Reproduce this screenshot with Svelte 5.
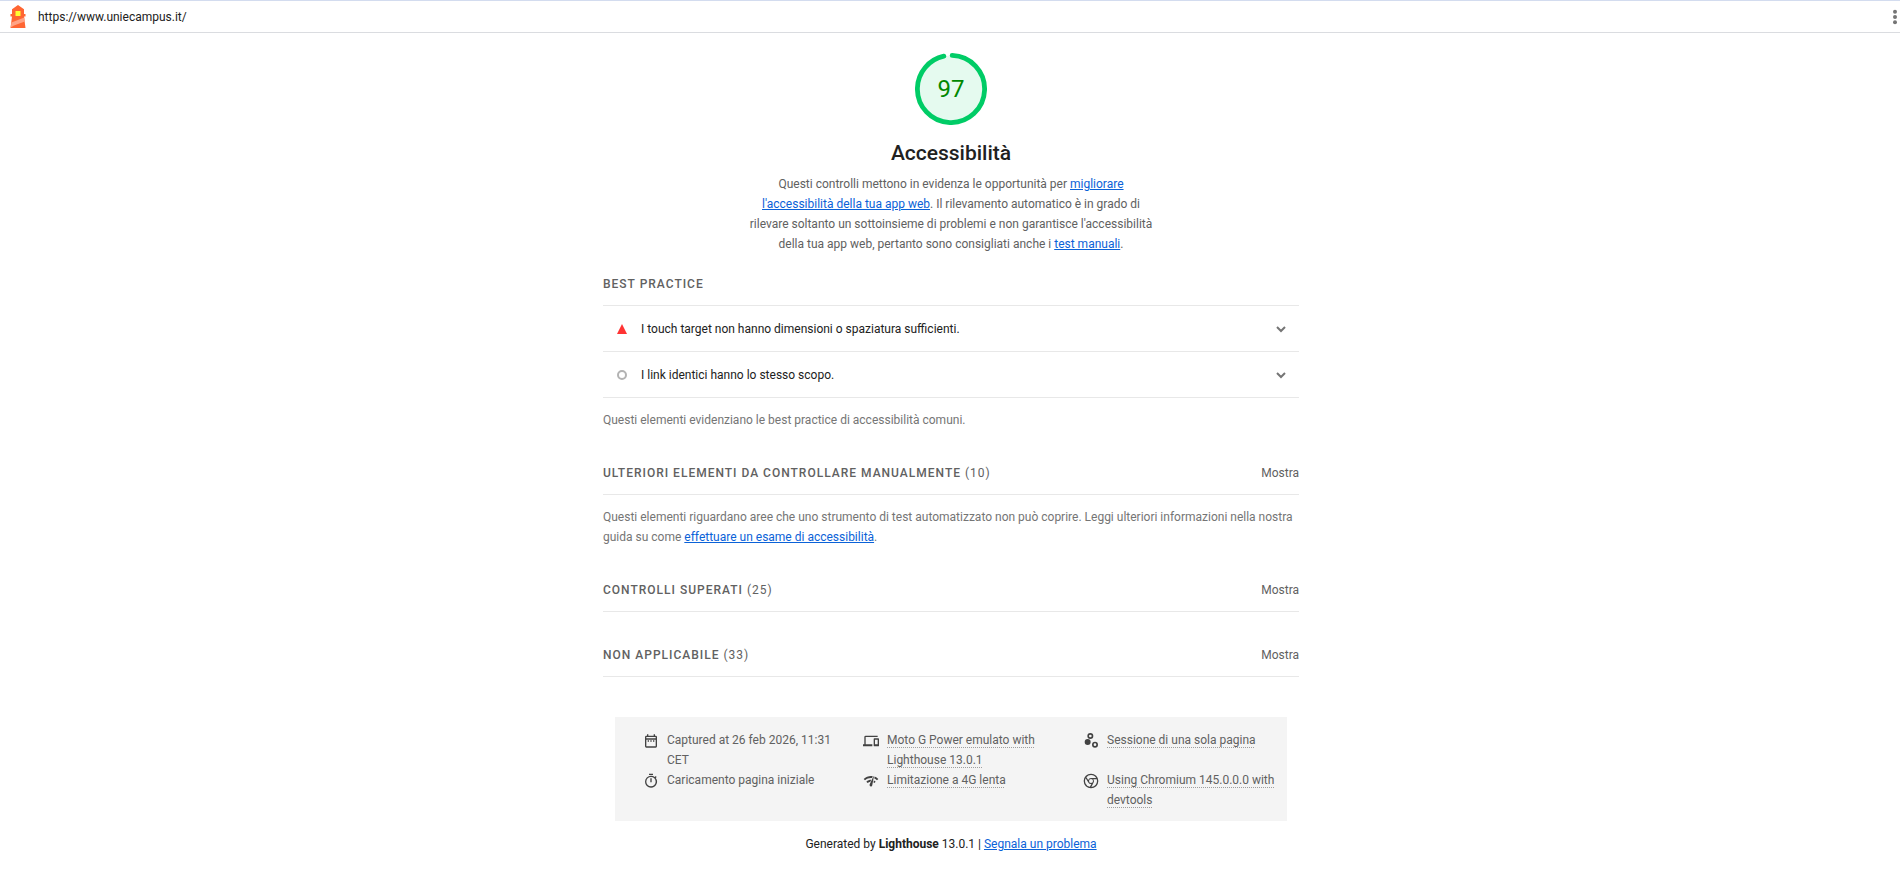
<script>
  const url = 'https://www.uniecampus.it/';
  const score = 97;

  const audits = [
    {title: 'I touch target non hanno dimensioni o spaziatura sufficienti.', status: 'fail'},
    {title: 'I link identici hanno lo stesso scopo.', status: 'informative'}
  ];

  const meta = [
    {icon: 'date', text: 'Captured at 26 feb 2026, 11:31 CET'},
    {icon: 'devices', text: 'Moto G Power emulato with Lighthouse 13.0.1', tooltip: true},
    {icon: 'samples', text: 'Sessione di una sola pagina', tooltip: true},
    {icon: 'stopwatch', text: 'Caricamento pagina iniziale'},
    {icon: 'network', text: 'Limitazione a 4G lenta', tooltip: true},
    {icon: 'chrome', text: 'Using Chromium 145.0.0.0 with devtools', tooltip: true}
  ];

  const icons = {
    date: 'M7 11h2v2H7zm14-5v14a2 2 0 01-2 2H5a2 2 0 01-2-2V6c0-1.1.9-2 2-2h1V2h2v2h8V2h2v2h1a2 2 0 012 2zM5 8h14V6H5v2zm14 12V10H5v10h14zm-4-7h2v-2h-2v2zm-4 0h2v-2h-2v2z',
    devices: 'M4 6h18V4H4a2 2 0 00-2 2v11H0v3h14v-3H4V6zm19 2h-6a1 1 0 00-1 1v10c0 .6.5 1 1 1h6c.6 0 1-.5 1-1V9c0-.6-.5-1-1-1zm-1 9h-4v-7h4v7z',
    samples: 'M7 9a4.500 4.500 0 110 9 4.500 4.500 0 010-9zM11 0a4.500 4.500 0 110 9 4.500 4.500 0 010-9zm0 2.500a2 2 0 100 4 2 2 0 000-4zM18 13a4.500 4.500 0 110 9 4.500 4.500 0 010-9zm0 2.500a2 2 0 100 4 2 2 0 000-4z',
    stopwatch: 'M15 1H9v2h6V1zm-4 13h2V8h-2v6zm8.1-6.6L20.5 6l-1.4-1.4L17.7 6A9 9 0 0012 4a9 9 0 000 18 9 9 0 007.1-14.6zM12 20a7 7 0 110-14 7 7 0 010 14z',
    network: 'M15.9 5c-.2 0-.3 0-.4.2v.2L10.1 17a2 2 0 00-.2 1 2 2 0 004 .4l2.4-12.9c0-.3-.2-.5-.5-.5zM1 9l2 2c2.9-2.9 6.8-4 10.5-3.6l1.2-2.7C10 3.8 4.7 5.3 1 9zm20 2l2-2a15.4 15.4 0 00-5.6-3.6L17 8.2c1.5.7 2.9 1.6 4 2.8zm-4 4l2-2a9.9 9.9 0 00-2.7-1.9l-.5 3 1.2.9zM5 13l2 2a7.1 7.1 0 014-2l1.3-2.9C9.7 10.1 7 11 5 13z',
    chrome: 'M12 1a11 11 0 100 22 11 11 0 000-22zm0 2a9 9 0 017.8 4.5H12a4.500 4.500 0 00-4.200 2.900L5.100 6.200A9 9 0 0112 3zm0 6a3 3 0 110 6 3 3 0 010-6zM4 8l4 6.200a4.500 4.500 0 004.600 2.300L10.300 20.800A9 9 0 014 8zm8.600 13l3.500-7a4.500 4.500 0 00-.700-4.500h5.200A9 9 0 0112.600 21z'
  };

  // ring length for a radius of 56
  const ring = 2 * Math.PI * 56;
  const arc = ring * score / 100 - 4;
</script>

{#snippet group(title, count)}
  <summary class="group-header">
    <h2>{title} <span class="count">({count})</span></h2>
    <span class="toggle">Mostra</span>
  </summary>
{/snippet}

<header class="topbar">
  <svg class="logo" viewBox="0 0 24 24">
    <path fill="#f63" d="m12 0 6 4.200V9h1.500v2.500H18L19.500 23h-15L6 11.500H4.500V9H6V4.200z" />
    <path fill="#ffa385" d="m5.500 17.500 12.800-5 .5 4L8 20.500l-3.400 2z" />
    <path fill="#ff3" d="M9.500 6h5v5h-5z" />
  </svg>
  <a class="url" href={url}>{url}</a>
  <button class="tools" aria-label="Strumenti">
    <svg viewBox="0 0 24 24">
      <circle cx="12" cy="4" r="3" /><circle cx="12" cy="12" r="3" /><circle cx="12" cy="20" r="3" />
    </svg>
  </button>
</header>

<div class="content">
  <main class="report">
    <section class="category">
      <div class="gauge">
        <svg viewBox="0 0 120 120">
          <circle class="gauge-base" cx="60" cy="60" r="56" />
          <circle class="gauge-arc" cx="60" cy="60" r="56" stroke-dasharray="{arc} {ring}" />
        </svg>
        <span class="score">{score}</span>
      </div>
      <h1>Accessibilità</h1>
      <p class="intro">
        Questi controlli mettono in evidenza le opportunità per <a href="#migliorare">migliorare l'accessibilità della tua app web</a>.
        Il rilevamento automatico è in grado di rilevare soltanto un sottoinsieme di problemi e non garantisce l'accessibilità
        della tua app web, pertanto sono consigliati anche i <a href="#manuali">test manuali</a>.
      </p>
    </section>

    <section class="group">
      <div class="group-header"><h2>Best practice</h2></div>
      {#each audits as audit}
        <details class="audit">
          <summary>
            <svg class="status {audit.status}" viewBox="0 0 10 10">
              {#if audit.status === 'fail'}
                <path d="M5 0l5 10H0z" />
              {:else}
                <circle cx="5" cy="5" r="4" />
              {/if}
            </svg>
            <span class="audit-title">{audit.title}</span>
            <svg class="chevron" viewBox="0 0 10 10"><path d="M1 3l4 4 4-4" /></svg>
          </summary>
        </details>
      {/each}
      <p class="note">Questi elementi evidenziano le best practice di accessibilità comuni.</p>
    </section>

    <section class="group">
      <details>
        {@render group('Ulteriori elementi da controllare manualmente', 10)}
      </details>
      <p class="note">
        Questi elementi riguardano aree che uno strumento di test automatizzato non può coprire. Leggi ulteriori informazioni nella nostra
        guida su come <a href="#esame">effettuare un esame di accessibilità</a>.
      </p>
    </section>

    <details class="group">
      {@render group('Controlli superati', 25)}
    </details>

    <details class="group">
      {@render group('Non applicabile', 33)}
    </details>
  </main>

  <footer>
    <ul class="meta">
      {#each meta as item}
        <li>
          <svg viewBox="0 0 24 24"><path fill-rule="evenodd" d={icons[item.icon]} /></svg>
          <span class:tooltip={item.tooltip}>{item.text}</span>
        </li>
      {/each}
    </ul>
    <p class="generated">
      Generated by <b>Lighthouse</b> 13.0.1 | <a href="#segnala">Segnala un problema</a>
    </p>
  </footer>
</div>

<style>
  :global(body) {
    background: #fff;
    color: #212121;
    font: 12px/20px Roboto, "Open Sans", sans-serif;
  }

  h1, h2, p, ul {
    margin: 0;
    padding: 0;
  }

  a {
    color: #0b62d8;
  }

  summary {
    list-style: none;
    cursor: pointer;
  }

  .topbar {
    display: flex;
    align-items: center;
    height: 31px;
    border-top: 1px solid #d3dcef;
    border-bottom: 1px solid #dadce0;
  }

  .logo {
    width: 24px;
    height: 24px;
    margin: 0 8px 0 6px;
  }

  .url {
    flex: 1;
    color: #212121;
    text-decoration: none;
  }

  .tools {
    display: flex;
    width: 10px;
    padding: 0;
    border: none;
    background: none;
    justify-content: center;
  }

  .tools svg {
    flex: none;
    width: 16px;
    height: 16px;
    fill: #757575;
  }

  .content {
    padding-left: 2px;
  }

  .report {
    max-width: 696px;
    margin: 0 auto;
    padding: 20px 12px 0;
  }

  .category {
    display: flex;
    flex-direction: column;
    align-items: center;
    padding-bottom: 20px;
  }

  .gauge {
    display: grid;
    place-items: center;
    width: 72px;
    height: 72px;
  }

  .gauge svg, .score {
    grid-area: 1 / 1;
  }

  .gauge circle {
    fill: none;
    stroke-width: 8;
  }

  .gauge .gauge-base {
    fill: #e5faef;
  }

  .gauge .gauge-arc {
    stroke: #0c6;
    stroke-linecap: round;
    transform: rotate(-88deg);
    transform-origin: center;
  }

  .score {
    color: #080;
    font-size: 24px;
  }

  h1 {
    margin: 14px 0 7px;
    font-size: 21px;
    font-weight: 500;
    line-height: 28px;
  }

  .intro {
    max-width: 408px;
    color: #616161;
    text-align: center;
  }

  .group {
    margin-bottom: 33px;
  }

  .group-header {
    display: flex;
    justify-content: space-between;
    padding-bottom: 11px;
    border-bottom: 1px solid #e8e8e8;
    color: #616161;
  }

  h2 {
    font-size: 12px;
    font-weight: 500;
    letter-spacing: 1px;
    text-transform: uppercase;
  }

  .count {
    font-weight: 400;
  }

  .audit summary {
    display: flex;
    align-items: center;
    height: 45px;
    padding: 0 13px 0 14px;
    border-bottom: 1px solid #e8e8e8;
  }

  .status {
    width: 10px;
    height: 10px;
    margin-right: 14px;
  }

  .fail {
    fill: #f33;
  }

  .informative {
    fill: none;
    stroke: #b3b3b3;
    stroke-width: 2;
  }

  .audit-title {
    flex: 1;
  }

  .chevron {
    width: 10px;
    height: 10px;
    fill: none;
    stroke: #757575;
    stroke-width: 2;
  }

  .note {
    padding-top: 12px;
    color: #757575;
  }

  .meta {
    display: grid;
    grid-template-columns: repeat(3, 1fr);
    column-gap: 28px;
    max-width: 632px;
    margin: 40px auto 0;
    padding: 13px 12px 11px 28px;
    background: #f4f4f4;
    list-style: none;
    color: #616161;
  }

  .meta li {
    display: flex;
    gap: 8px;
  }

  .meta svg {
    flex: none;
    width: 16px;
    height: 16px;
    margin-top: 3px;
    fill: #424242;
  }

  .tooltip {
    text-decoration: underline dotted #9e9e9e;
    text-underline-offset: 3px;
  }

  .generated {
    padding: 13px 0 16px;
    text-align: center;
  }
</style>
